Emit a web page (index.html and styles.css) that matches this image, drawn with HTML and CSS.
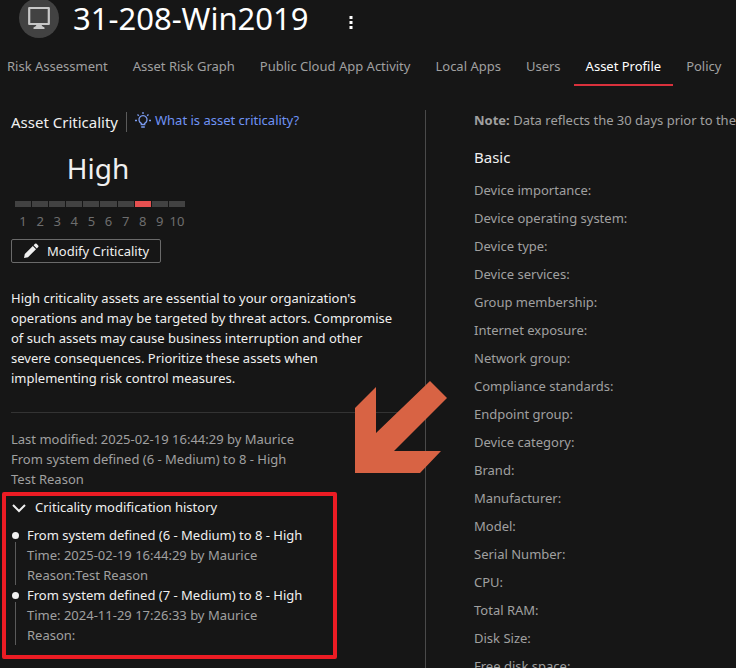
FILE: index.html
```
<!DOCTYPE html>
<html lang="en">
<head>
    <meta charset="UTF-8">
    <meta name="viewport" content="width=device-width, initial-scale=1.0">
    <title>31-208-Win2019 - Asset Profile</title>
    <link rel="stylesheet" href="styles.css">
</head>
<body>

<header class="asset-header">
    <span class="avatar">
        <svg width="24" height="24" viewBox="0 0 24 24" aria-hidden="true">
            <path d="M2.200 2H21.800V18H2.200Z" fill="none" stroke="#c8c8c8" stroke-width="2.200" stroke-linejoin="round"/>
            <path d="M9.500 18.500h5l.5 1.500 2.500 1.500v1.500H6.500v-1.500L9 20z" fill="#c8c8c8"/>
        </svg>
    </span>
    <h1>31-208-Win2019</h1>
    <button class="more" type="button" aria-label="More actions">
        <svg width="4" height="14" viewBox="0 0 4 14" aria-hidden="true">
            <path d="M.5 0h3v3h-3zM.5 5h3v3h-3zM.5 10h3v3h-3z" fill="#fff"/>
        </svg>
    </button>
</header>

<nav class="tabs">
    <a href="#">Risk Assessment</a>
    <a href="#">Asset Risk Graph</a>
    <a href="#">Public Cloud App Activity</a>
    <a href="#">Local Apps</a>
    <a href="#">Users</a>
    <a href="#" class="active">Asset Profile</a>
    <a href="#">Policy</a>
</nav>

<main class="profile">
    <section class="criticality">
        <div class="criticality-title">
            <h2>Asset Criticality</h2>
            <a href="#" class="help">
                <svg width="16" height="16" viewBox="0 0 16 16" fill="none" stroke="#7c9cf0" stroke-width="1.300" aria-hidden="true">
                    <path d="M8 0v2M2.500 2.500l1.300 1.300M13.500 2.500l-1.300 1.300M0 8.500h2M14 8.500h2M6.300 12.500v-1.200a4 4 0 1 1 3.400 0v1.200zM6.200 15h3.600"/>
                </svg>
                What is asset criticality?
            </a>
        </div>

        <div class="gauge">
            <p class="level">High</p>
            <ol class="scale">
                <li>1</li>
                <li>2</li>
                <li>3</li>
                <li>4</li>
                <li>5</li>
                <li>6</li>
                <li>7</li>
                <li class="current">8</li>
                <li>9</li>
                <li>10</li>
            </ol>
        </div>

        <button class="modify" type="button">
            <svg width="16" height="16" viewBox="0 0 16 16" fill="#f0f0f0" aria-hidden="true">
                <path d="M1 15l.8-4 8-8L13 6.200l-8 8zM10.600 2.200l1.400-1.400q.8-.6 1.600 0l1.600 1.600q.6.8 0 1.600l-1.400 1.400z"/>
            </svg>
            Modify Criticality
        </button>

        <p class="description">High criticality assets are essential to your organization's operations and may be targeted by threat actors. Compromise of such assets may cause business interruption and other severe consequences. Prioritize these assets when implementing risk control measures.</p>

        <div class="last-modified">
            <p>Last modified: 2025-02-19 16:44:29 by Maurice</p>
            <p>From system defined (6 - Medium) to 8 - High</p>
            <p>Test Reason</p>
        </div>

        <div class="history">
            <button class="history-toggle" type="button" aria-expanded="true">
                <svg width="16" height="16" viewBox="0 0 16 16" fill="none" stroke="#f0f0f0" stroke-width="2" aria-hidden="true">
                    <path d="M2 6l6 6 6-6"/>
                </svg>
                Criticality modification history
            </button>
            <ul class="timeline">
                <li>
                    <p class="change">From system defined (6 - Medium) to 8 - High</p>
                    <p>Time: 2025-02-19 16:44:29 by Maurice</p>
                    <p>Reason:Test Reason</p>
                </li>
                <li>
                    <p class="change">From system defined (7 - Medium) to 8 - High</p>
                    <p>Time: 2024-11-29 17:26:33 by Maurice</p>
                    <p>Reason:</p>
                </li>
            </ul>
            <div class="highlight"></div>
            <svg class="arrow" width="94" height="94" viewBox="0 0 94 94" aria-hidden="true">
                <path d="M1 93V28L22 7V53L76 1L93 18L40 71H87L66 93Z" fill="#d86344"/>
            </svg>
        </div>
    </section>

    <section class="details">
        <p class="note"><strong>Note:</strong> Data reflects the 30 days prior to the last update.</p>
        <h2>Basic</h2>
        <ul class="fields">
            <li>Device importance:</li>
            <li>Device operating system:</li>
            <li>Device type:</li>
            <li>Device services:</li>
            <li>Group membership:</li>
            <li>Internet exposure:</li>
            <li>Network group:</li>
            <li>Compliance standards:</li>
            <li>Endpoint group:</li>
            <li>Device category:</li>
            <li>Brand:</li>
            <li>Manufacturer:</li>
            <li>Model:</li>
            <li>Serial Number:</li>
            <li>CPU:</li>
            <li>Total RAM:</li>
            <li>Disk Size:</li>
            <li>Free disk space:</li>
        </ul>
    </section>
</main>

</body>
</html>
```
FILE: styles.css
```
* {
    box-sizing: border-box;
}
body {
    display: flex;
    flex-direction: column;
    height: 100vh;
    margin: 0;
    overflow: hidden;
    background-color: #161616;
    color: #a0a0a0;
    font-family: "Noto Sans", "Segoe UI", sans-serif;
    font-size: 13px;
    line-height: 20px;
}
h1, h2, p, ul, ol {
    margin: 0;
    padding: 0;
    font-weight: normal;
}
ul, ol {
    list-style: none;
}
a {
    color: inherit;
    text-decoration: none;
}
button {
    padding: 0;
    border: none;
    background: none;
    color: #f0f0f0;
    font: inherit;
    cursor: pointer;
}
svg {
    flex: none;
}
.asset-header {
    display: flex;
    flex: none;
    align-items: center;
    height: 40px;
    margin-top: -2px;
    padding-left: 19px;
}
.avatar {
    display: flex;
    align-items: center;
    justify-content: center;
    width: 40px;
    height: 40px;
    border-radius: 50%;
    background-color: #424242;
}
.asset-header h1 {
    margin-left: 14px;
    color: #fff;
    font-size: 31px;
    line-height: 44px;
}
.more {
    display: flex;
    margin: 10px 0 0 40px;
}
.tabs {
    display: flex;
    flex: none;
    gap: 25px;
    padding: 18px 7px 0;
    white-space: nowrap;
}
.tabs a {
    height: 30px;
}
.tabs .active {
    margin: 0 -12px;
    padding: 0 12px;
    border-bottom: 2px solid #d9313c;
    color: #fff;
}
.profile {
    display: grid;
    flex: 1;
    grid-template-columns: 426fr 310fr;
    min-height: 0;
    padding-top: 24px;
}
.criticality {
    padding: 0 24px 0 11px;
    border-right: 1px solid #4a4a4a;
}
.criticality-title {
    display: flex;
    align-items: flex-start;
}
h2 {
    color: #f0f0f0;
    font-size: 15px;
    line-height: 20px;
}
.criticality-title h2 {
    margin-top: 2px;
    padding-right: 8px;
    border-right: 1px solid #5a5a5a;
}
.help {
    display: flex;
    gap: 4px;
    align-items: center;
    height: 20px;
    margin-left: 8px;
    color: #6f93f5;
}
.gauge {
    width: 170px;
    margin-left: 4px;
}
.level {
    margin-top: 16px;
    padding-right: 4px;
    color: #f0f0f0;
    font-size: 28px;
    line-height: 40px;
    text-align: center;
}
.scale {
    display: flex;
    gap: 1px;
    margin-top: 13px;
    color: #6e6e6e;
    text-align: center;
}
.scale li {
    flex: 1;
}
.scale li::before {
    content: "";
    display: block;
    height: 6px;
    margin-bottom: 4px;
    background-color: #424242;
}
.scale .current::before {
    background-color: #e65050;
}
.modify {
    display: flex;
    gap: 8px;
    align-items: center;
    height: 24px;
    margin-top: 8px;
    padding: 0 11px;
    border: 1px solid #6a6a6a;
    border-radius: 2px;
}
.description {
    margin-top: 25px;
    padding-bottom: 24px;
    border-bottom: 1px solid #333;
    color: #f0f0f0;
}
.last-modified {
    margin-top: 16px;
}
.history {
    position: relative;
    margin-top: 8px;
}
.history-toggle {
    display: flex;
    gap: 8px;
    align-items: center;
}
.timeline {
    margin-top: 8px;
}
.timeline li {
    position: relative;
    padding-left: 16px;
}
.timeline li::before {
    content: "";
    position: absolute;
    top: 7px;
    left: 1px;
    width: 7px;
    height: 7px;
    border-radius: 50%;
    background-color: #f0f0f0;
}
.timeline li::after {
    content: "";
    position: absolute;
    top: 17px;
    bottom: 0;
    left: 4px;
    width: 1px;
    background-color: #5a5a5a;
}
.timeline .change {
    color: #f0f0f0;
}
.highlight {
    position: absolute;
    top: -5px;
    left: -9px;
    width: 335px;
    height: 167px;
    border: 4px solid #ec1c24;
    border-radius: 2px;
}
.arrow {
    position: absolute;
    top: -117px;
    left: 343px;
}
.details {
    padding-left: 48px;
    overflow: hidden;
    white-space: nowrap;
}
.details h2 {
    margin-top: 17px;
}
.fields {
    display: grid;
    gap: 8px;
    margin-top: 13px;
}
```
